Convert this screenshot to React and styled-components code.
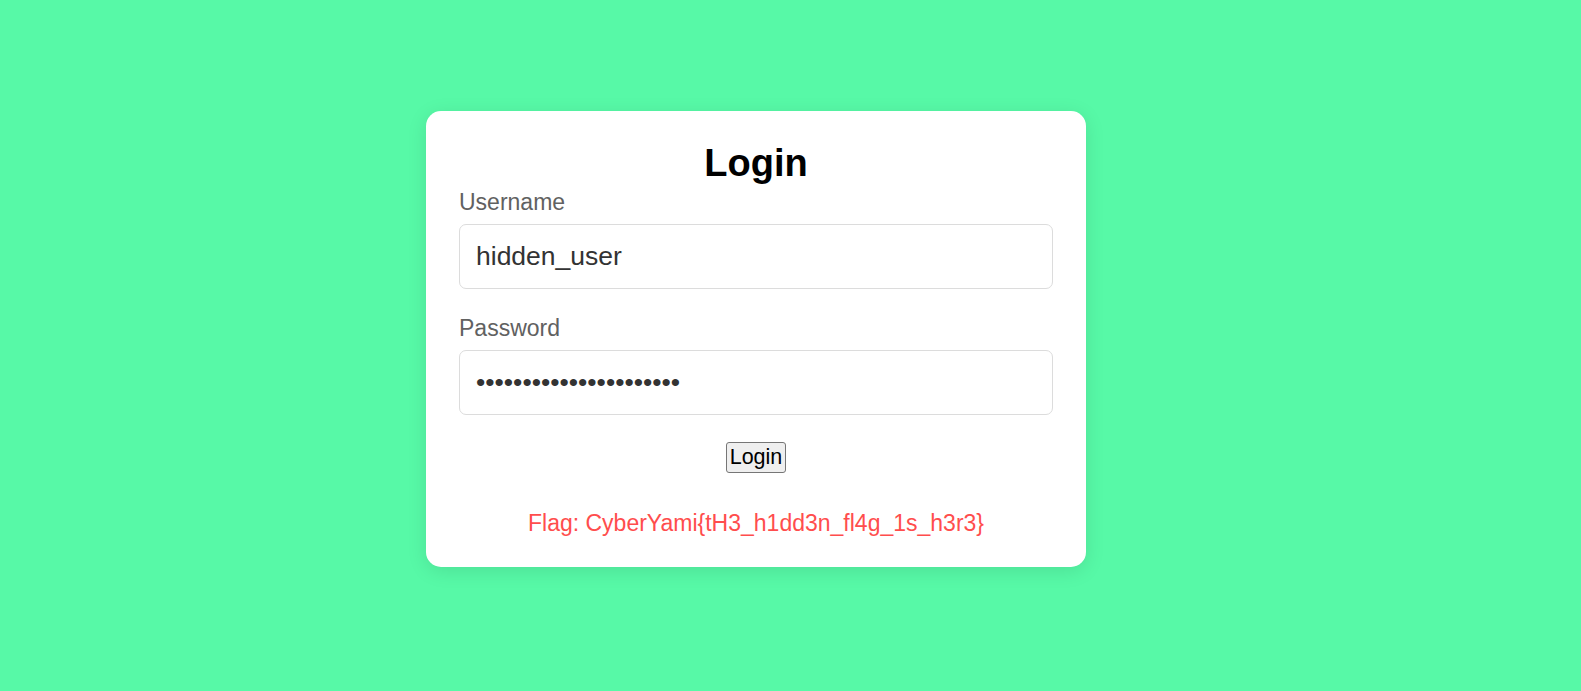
import styled, { createGlobalStyle } from 'styled-components';

const GlobalStyle = createGlobalStyle`
  html,
  body {
    margin: 0;
    padding: 0;
    background: #57f9a7;
    font-family: 'Liberation Sans', Arial, sans-serif;
  }
`;

function App() {
  return (
    <>
      <GlobalStyle />
      <Page>
        <Card>
          <Title>Login</Title>
          <Field>
            <Label htmlFor='username'>Username</Label>
            <Input id='username' type='text' defaultValue='hidden_user' />
          </Field>
          <Field>
            <Label htmlFor='password'>Password</Label>
            <Input id='password' type='password' defaultValue='tH3_h1dd3n_fl4g_1s_h3r' />
          </Field>
          <Actions>
            <SubmitButton type='button'>Login</SubmitButton>
          </Actions>
          <Flag>Flag: CyberYami&#123;tH3_h1dd3n_fl4g_1s_h3r3&#125;</Flag>
        </Card>
      </Page>
    </>
  );
}

const Page = styled.div`
  min-height: 691px;
  box-sizing: border-box;
  padding: 111px 0 0 426px;
`;

const Card = styled.div`
  width: 660px;
  box-sizing: border-box;
  padding: 31px 33px 31px;
  background: #fff;
  border-radius: 15px;
  box-shadow: 0 4px 20px rgba(0, 0, 0, 0.1);
`;

const Title = styled.h1`
  margin: 0 0 4px;
  font-size: 38px;
  line-height: 43px;
  font-weight: bold;
  color: #000;
  text-align: center;
`;

const Field = styled.div`
  display: flex;
  flex-direction: column;
  gap: 9px;
  margin-bottom: 26px;
`;

const Label = styled.label`
  font-size: 23px;
  line-height: 26px;
  color: #616161;
`;

const Input = styled.input`
  all: unset;
  box-sizing: border-box;
  width: 100%;
  padding: 16px;
  font-family: 'Liberation Sans', Arial, sans-serif;
  font-size: 26.5px;
  line-height: 31px;
  color: #333;
  border: 1px solid #dcdcdc;
  border-radius: 7px;
  background: #fff;
`;

const Actions = styled.div`
  display: flex;
  justify-content: center;
  margin-top: 27px;
`;

const SubmitButton = styled.button`
  padding: 2px 3px;
  font-family: 'Liberation Sans', Arial, sans-serif;
  font-size: 21.5px;
  line-height: 25px;
  color: #000;
  background: #efefef;
  border: 1px solid #767676;
  border-radius: 3px;
  cursor: pointer;
`;

const Flag = styled.p`
  margin: 37px 0 0;
  font-size: 23px;
  line-height: 26px;
  color: #ff4d4d;
  text-align: center;
`;

export default App;
